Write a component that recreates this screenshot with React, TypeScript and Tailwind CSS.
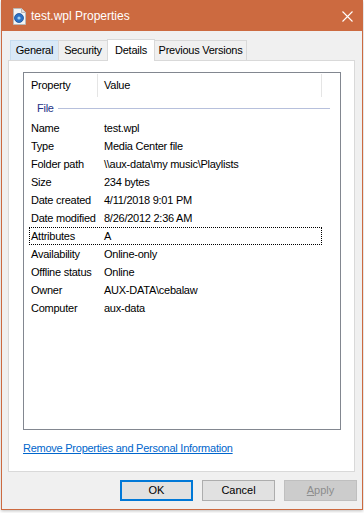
import React from "react";

const FONT = "font-['Liberation_Sans',Arial,sans-serif]";

const rows: [string, string][] = [
  ["Name", "test.wpl"],
  ["Type", "Media Center file"],
  ["Folder path", "\\\\aux-data\\my music\\Playlists"],
  ["Size", "234 bytes"],
  ["Date created", "4/11/2018 9:01 PM"],
  ["Date modified", "8/26/2012 2:36 AM"],
  ["Attributes", "A"],
  ["Availability", "Online-only"],
  ["Offline status", "Online"],
  ["Owner", "AUX-DATA\\cebalaw"],
  ["Computer", "aux-data"],
];

function FileIcon() {
  return (
    <svg width="15" height="17" viewBox="0 0 15 17" aria-hidden>
      <path d="M1.5 0.5h8l4 4v12h-12z" fill="#f4f4f4" stroke="#b9b9b9" />
      <path d="M9.5 0.5v4h4" fill="#e2e2e2" stroke="#b9b9b9" />
      <circle cx="7" cy="10" r="4.5" fill="#2d72c4" />
      <circle cx="7" cy="10" r="4.5" fill="none" stroke="#1c4f96" strokeWidth="0.8" />
      <circle cx="7" cy="10" r="1.6" fill="#9fd0f5" />
    </svg>
  );
}

function Tab({ label, width, active, hover }: { label: string; width: string; active?: boolean; hover?: boolean }) {
  if (active) {
    return (
      <div className={`relative z-10 -mb-px -ml-px flex h-[22px] items-center justify-center border border-b-0 border-[#d9d9d9] bg-white ${width}`}>
        {label}
      </div>
    );
  }
  return (
    <div
      className={`flex h-[20px] items-center justify-center border border-b-0 ${width} ${
        hover ? "border-[#c5dcf0] bg-[#d9e9f7]" : "border-[#d9d9d9] bg-[#f0f0f0]"
      } -ml-px first:ml-0`}
    >
      {label}
    </div>
  );
}

function Button({ children, primary, disabled }: { children: React.ReactNode; primary?: boolean; disabled?: boolean }) {
  return (
    <div
      className={`flex h-[21px] w-[73px] items-center justify-center text-[11px] ${
        primary
          ? "border-2 border-[#0078d7] bg-[#e1e1e1] text-black"
          : disabled
          ? "border border-[#bfbfbf] bg-[#cccccc] text-[#8d8d8d]"
          : "border border-[#adadad] bg-[#e1e1e1] text-black"
      }`}
    >
      {children}
    </div>
  );
}

export default function App() {
  return (
    <div className={`h-[513px] w-[364px] bg-white ${FONT}`}>
      <div className="ml-px flex h-[510px] w-[362px] flex-col border border-t-0 border-[#cc6a40] bg-[#f0f0f0] shadow-[0_1px_3px_rgba(0,0,0,0.25)]">
        {/* title bar */}
        <div className="flex h-[31px] shrink-0 items-center bg-[#cc6a40] pl-[10px] pr-[9px] pt-px text-white">
          <FileIcon />
          <span className="ml-[4px] text-[12px]">test.wpl Properties</span>
          <svg className="ml-auto" width="11" height="11" viewBox="0 0 11 11" aria-hidden>
            <path d="M0.5 0.5l10 10M10.5 0.5l-10 10" stroke="white" strokeWidth="1.1" />
          </svg>
        </div>

        {/* tabs */}
        <div className="flex flex-col px-[6px] pt-[8px] text-[11px] tracking-[-0.25px] text-black">
          <div className="flex items-end pl-[2px]">
            <Tab label="General" width="w-[49px]" hover />
            <Tab label="Security" width="w-[50px]" />
            <Tab label="Details" width="w-[48px]" active />
            <Tab label="Previous Versions" width="w-[93px]" />
          </div>

          {/* panel */}
          <div className="flex h-[412px] w-[347px] flex-col border border-[#d9d9d9] bg-white pl-[14px] pr-[13px] pt-[11px]">
            <div className="h-[358px] border border-[#828790] bg-white">
              {/* header */}
              <div className="flex h-[24px] items-center pl-[5px]">
                <div className="flex h-[23px] w-[68px] items-center pl-[2px]">Property</div>
                <div className="h-[23px] w-px bg-[#e5e5e5]" />
                <div className="flex h-[23px] w-[223px] items-center pl-[6px]">Value</div>
                <div className="h-[23px] w-px bg-[#e5e5e5]" />
              </div>
              {/* group */}
              <div className="flex h-[22px] items-center pl-[13px] pr-[10px]">
                <span className="text-[#1e3287]">File</span>
                <div className="ml-[4px] h-px flex-1 bg-[#b7c0dc]" />
              </div>
              {rows.map(([k, v]) => (
                <div
                  key={k}
                  className={`ml-[5px] flex h-[18px] w-[293px] items-center ${
                    k === "Attributes" ? "border border-dotted border-black" : "border border-transparent"
                  }`}
                >
                  <div className="w-[74px] shrink-0 pl-px">{k}</div>
                  <div className="whitespace-nowrap">{v}</div>
                </div>
              ))}
            </div>
            <div className="mt-[10px] text-[11px] text-[#0066cc] underline">
              Remove Properties and Personal Information
            </div>
          </div>
        </div>

        {/* buttons */}
        <div className="mt-[8px] flex justify-end gap-[9px] pr-[5px]">
          <Button primary>OK</Button>
          <Button>Cancel</Button>
          <Button disabled>
            <span>
              <span className="underline">A</span>pply
            </span>
          </Button>
        </div>
      </div>
    </div>
  );
}
